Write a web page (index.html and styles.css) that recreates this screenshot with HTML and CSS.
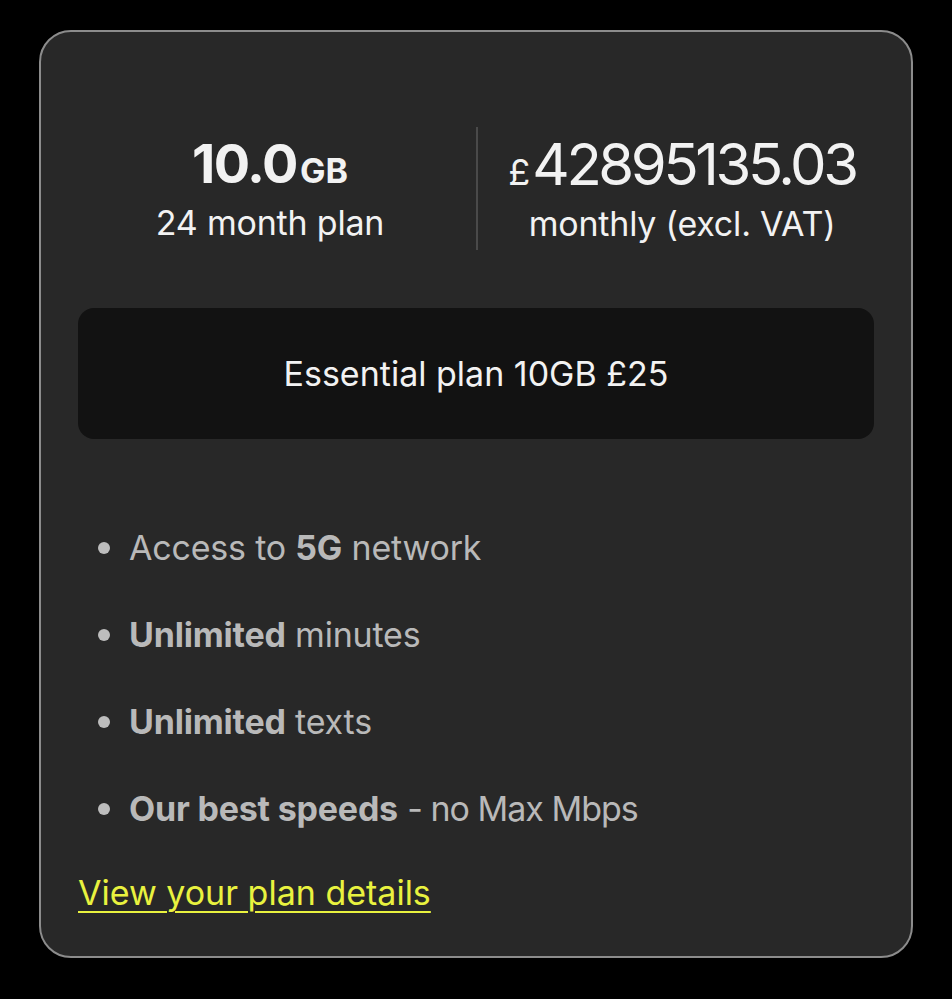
FILE: index.html
```html
<!DOCTYPE html>
<html>
<head>
<meta charset="utf-8">
<link rel="stylesheet" href="styles.css">
</head>
<body>
<div class="card">
  <div class="stats">
    <div class="stat stat-left">
      <div class="big"><span class="num">10.0</span><span class="unit">GB</span></div>
      <div class="sub">24 month plan</div>
    </div>
    <div class="divider"></div>
    <div class="stat stat-right">
      <div class="big"><span class="cur">£</span><span class="price">42895135.03</span></div>
      <div class="sub">monthly (excl. VAT)</div>
    </div>
  </div>
  <div class="plan">Essential plan 10GB £25</div>
  <ul class="features">
    <li>Access to <b>5G</b> network</li>
    <li><b>Unlimited</b> minutes</li>
    <li><b>Unlimited</b> texts</li>
    <li><b>Our best speeds</b> <span class="tight">- no Max Mbps</span></li>
  </ul>
  <a class="link" href="#">View your plan details</a>
</div>
</body>
</html>
```
FILE: styles.css
```css
html, body {
  margin: 0;
  padding: 0;
  background: #000;
}
body {
  font-family: Inter, "Noto Sans", sans-serif;
  padding: 30px 39px 0 39px;
}
.card {
  box-sizing: border-box;
  width: 874px;
  height: 928px;
  border: 2px solid #8c8c8c;
  border-radius: 32px;
  background: #282828;
  padding: 95px 37px 0 37px;
}
.stats {
  display: flex;
  height: 123px;
  align-items: stretch;
}
.stat {
  flex: 1;
  display: flex;
  flex-direction: column;
  align-items: center;
  justify-content: center;
  color: #f2f2f2;
  padding-top: 10px;
}
.stat-left {
  padding-right: 14px;
}
.stat-right {
  padding-left: 12px;
}
.divider {
  width: 2px;
  background: #4a4a4a;
}
.big {
  display: flex;
  align-items: baseline;
  line-height: 60px;
  margin-top: -8px;
}
.num {
  font-size: 54px;
  font-weight: 700;
  letter-spacing: -1.5px;
}
.unit {
  font-size: 34px;
  font-weight: 700;
  margin-left: 3px;
}
.cur {
  font-size: 36px;
  margin-right: 2px;
}
.price {
  font-size: 58px;
  font-weight: 400;
  letter-spacing: -3.4px;
}
.sub {
  font-size: 34px;
  line-height: 44px;
  letter-spacing: -0.2px;
}
.plan {
  margin-top: 58px;
  height: 131px;
  background: #121212;
  border-radius: 16px;
  display: flex;
  align-items: center;
  justify-content: center;
  color: #f2f2f2;
  font-size: 34px;
}
.features {
  list-style: none;
  margin: 65px 0 0 0;
  padding: 0;
}
.features li {
  height: 87px;
  line-height: 87px;
  font-size: 34px;
  color: #b9b9b9;
  padding-left: 51px;
  position: relative;
  letter-spacing: -0.2px;
}
.features li::before {
  content: "";
  position: absolute;
  left: 20px;
  top: 38px;
  width: 12px;
  height: 12px;
  border-radius: 50%;
  background: #bdbdbd;
}
.features b {
  font-weight: 700;
}
.features .tight {
  letter-spacing: -1px;
}
.link {
  display: inline-block;
  margin-top: 19px;
  font-size: 34px;
  line-height: 44px;
  color: #e9f23f;
  text-decoration: underline;
  text-decoration-thickness: 2px;
  text-underline-offset: 6px;
}
```
